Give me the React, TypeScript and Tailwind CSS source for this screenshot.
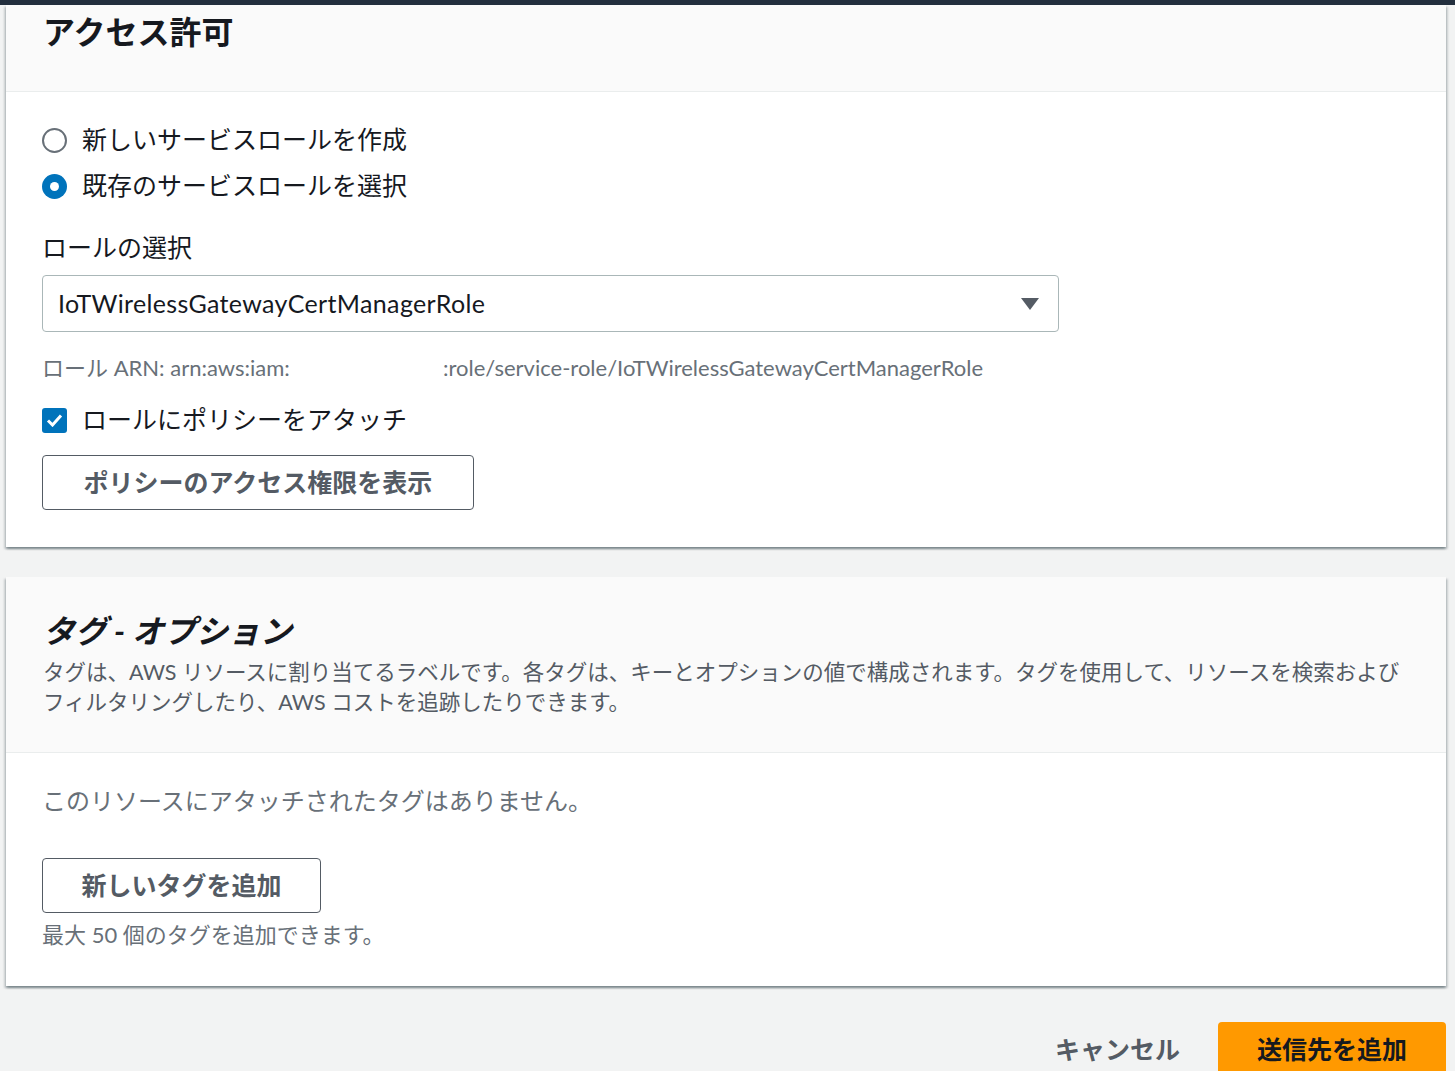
import React from "react";

const font = { fontFamily: 'Lato, "Noto Sans CJK JP", sans-serif' };

function Radio({ checked, label }: { checked?: boolean; label: string }) {
  return (
    <label className="flex items-center h-[46px] gap-[15px] text-[25px] text-[#16191f]">
      {checked ? (
        <span className="w-[25px] h-[25px] rounded-full bg-[#0073bb] flex items-center justify-center">
          <span className="w-[9px] h-[9px] rounded-full bg-white" />
        </span>
      ) : (
        <span className="w-[25px] h-[25px] rounded-full border-2 border-[#687078] bg-white" />
      )}
      <span>{label}</span>
    </label>
  );
}

function OutlineButton({ children, width }: { children: React.ReactNode; width: string }) {
  return (
    <button
      className={`h-[55px] ${width} border border-[#545b64] rounded-[4px] bg-white text-[25px] font-bold text-[#545b64]`}
    >
      {children}
    </button>
  );
}

export default function App() {
  return (
    <div className="min-h-screen bg-[#f2f3f3] overflow-hidden" style={font}>
      <div className="h-[5px] bg-[#232f3e]" />
      <div className="pl-[6px] pr-[9px]">
        {/* Access permissions */}
        <section className="bg-white shadow-[0_2px_2px_0_rgba(0,28,36,0.3),2px_2px_2px_0_rgba(0,28,36,0.15),-2px_2px_2px_0_rgba(0,28,36,0.15)]">
          <div className="h-[87px] bg-[#fafafa] border-b border-[#eaeded] px-[37px] pt-[7px]">
            <h2 className="text-[32px] leading-[40px] font-bold text-[#16191f]">アクセス許可</h2>
          </div>
          <div className="px-[36px] pt-[25px] pb-[37px]">
            <Radio label="新しいサービスロールを作成" />
            <Radio checked label="既存のサービスロールを選択" />
            <div className="mt-[20px] text-[25px] leading-[36px] text-[#16191f]">ロールの選択</div>
            <div className="mt-[10px] w-[1017px] h-[57px] border border-[#aab7b8] rounded-[4px] flex items-center justify-between pl-[15px] pr-[18px]">
              <span className="text-[25px] tracking-[0.35px] text-[#16191f]">IoTWirelessGatewayCertManagerRole</span>
              <svg width="20" height="14" viewBox="0 0 20 14">
                <path d="M1 1h18L10 13z" fill="#545b64" />
              </svg>
            </div>
            <div className="mt-[21px] text-[22px] leading-[30px] text-[#687078] flex">
              <span className="w-[401px]">ロール ARN: arn:aws:iam:</span>
              <span>:role/service-role/IoTWirelessGatewayCertManagerRole</span>
            </div>
            <label className="mt-[19px] flex items-center h-[36px] gap-[15px] text-[25px] text-[#16191f]">
              <span className="w-[25px] h-[25px] rounded-[3px] bg-[#0073bb] flex items-center justify-center">
                <svg width="17" height="14" viewBox="0 0 17 14">
                  <path d="M2 7.5l4.5 4.5L15 2.5" fill="none" stroke="white" strokeWidth="3" />
                </svg>
              </span>
              <span>ロールにポリシーをアタッチ</span>
            </label>
            <div className="mt-[17px]">
              <OutlineButton width="w-[432px]">ポリシーのアクセス権限を表示</OutlineButton>
            </div>
          </div>
        </section>

        {/* Tags */}
        <section className="mt-[30px] bg-white shadow-[0_2px_2px_0_rgba(0,28,36,0.3),2px_2px_2px_0_rgba(0,28,36,0.15),-2px_2px_2px_0_rgba(0,28,36,0.15)]">
          <div className="bg-[#fafafa] border-b border-[#eaeded] px-[37px] pt-[34px] pb-[35px]">
            <h2 className="text-[32px] leading-[40px] font-bold italic text-[#16191f]">タグ&nbsp;-&nbsp;オプション</h2>
            <p className="mt-[6px] text-[21.5px] leading-[30px] text-[#545b64] whitespace-nowrap">
              タグは、AWS リソースに割り当てるラベルです。各タグは、キーとオプションの値で構成されます。タグを使用して、リソースを検索および
              <br />
              フィルタリングしたり、AWS コストを追跡したりできます。
            </p>
          </div>
          <div className="px-[36px] pt-[30px] pb-[36px]">
            <div className="text-[24px] leading-[36px] text-[#687078]">このリソースにアタッチされたタグはありません。</div>
            <div className="mt-[39px]">
              <OutlineButton width="w-[279px]">新しいタグを追加</OutlineButton>
            </div>
            <div className="mt-[7px] text-[22px] leading-[30px] text-[#687078]">最大 50 個のタグを追加できます。</div>
          </div>
        </section>

        {/* Footer */}
        <div className="mt-[36px] flex justify-end items-center gap-[38px]">
          <button className="text-[25px] font-bold text-[#545b64]">キャンセル</button>
          <button className="h-[55px] w-[228px] rounded-[4px] bg-[#ff9900] text-[25px] font-bold text-[#16191f]">
            送信先を追加
          </button>
        </div>
      </div>
    </div>
  );
}
